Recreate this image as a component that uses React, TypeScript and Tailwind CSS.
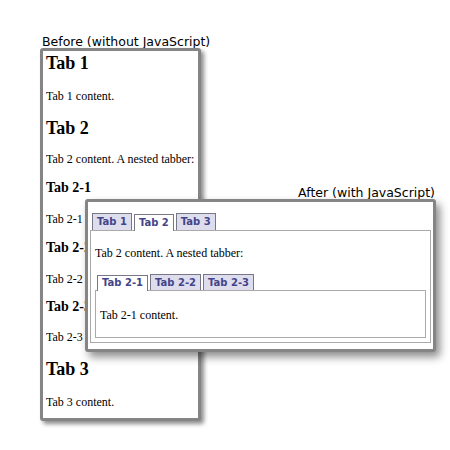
import React from 'react';

const serif = 'font-["Liberation_Serif","Times_New_Roman",serif] text-black';
const label = 'font-["DejaVu_Sans",Verdana,sans-serif] text-[12.5px] leading-[13px] text-black whitespace-nowrap';

function Tab({ title, active, h }: { title: string; active?: boolean; h: string }) {
  return (
    <div
      className={`${h} flex items-center px-[4px] border border-b-0 border-[#778] font-["DejaVu_Sans",Verdana,sans-serif] text-[10px] font-bold text-[#448] leading-none ${
        active ? 'bg-white mb-[-1px] pb-px' : 'bg-[#dde]'
      }`}
    >
      {title}
    </div>
  );
}

function BeforeWindow() {
  const rows: { kind: 'h2' | 'h3' | 'p'; text: string; mt: string }[] = [
    { kind: 'h2', text: 'Tab 1', mt: 'mt-[2px]' },
    { kind: 'p', text: 'Tab 1 content.', mt: 'mt-[16px]' },
    { kind: 'h2', text: 'Tab 2', mt: 'mt-[15px]' },
    { kind: 'p', text: 'Tab 2 content. A nested tabber:', mt: 'mt-[14px]' },
    { kind: 'h3', text: 'Tab 2-1', mt: 'mt-[14px]' },
    { kind: 'p', text: 'Tab 2-1 content.', mt: 'mt-[16px]' },
    { kind: 'h3', text: 'Tab 2-2', mt: 'mt-[14px]' },
    { kind: 'p', text: 'Tab 2-2 content.', mt: 'mt-[16px]' },
    { kind: 'h3', text: 'Tab 2-3', mt: 'mt-[13px]' },
    { kind: 'p', text: 'Tab 2-3 content.', mt: 'mt-[15px]' },
    { kind: 'h2', text: 'Tab 3', mt: 'mt-[15px]' },
    { kind: 'p', text: 'Tab 3 content.', mt: 'mt-[16px]' },
  ];

  return (
    <div className="absolute left-[40px] top-[35px] flex flex-col">
      <div className={`${label} pl-[2px]`}>Before (without JavaScript)</div>
      <div className={`w-[161px] h-[373px] bg-white border-[3px] border-[#858585] rounded-[3px] shadow-[3px_3px_4px_rgba(0,0,0,0.45)] pl-[3px] overflow-hidden ${serif}`}>
        {rows.map((r, i) => {
          if (r.kind === 'h2') return <div key={i} className={`${r.mt} text-[18px] leading-[20px] font-bold whitespace-nowrap`}>{r.text}</div>;
          if (r.kind === 'h3') return <div key={i} className={`${r.mt} text-[14px] leading-[16px] font-bold whitespace-nowrap`}>{r.text}</div>;
          return <div key={i} className={`${r.mt} text-[12px] leading-[14px] whitespace-nowrap`}>{r.text}</div>;
        })}
      </div>
    </div>
  );
}

function AfterWindow() {
  return (
    <div className="absolute left-[85px] top-[186px] flex flex-col items-end">
      <div className={`${label} pr-px`}>After (with JavaScript)</div>
      <div className="w-[351px] h-[153px] bg-white border-[3px] border-[#858585] rounded-[3px] shadow-[4px_5px_8px_rgba(0,0,0,0.45)] px-[2px] pt-[11px]">
        {/* outer tabber */}
        <div className="flex items-end gap-[2px] pl-[2px] border-b border-[#aaa]">
          <Tab title="Tab 1" h="h-[17px]" />
          <Tab title="Tab 2" h="h-[17px]" active />
          <Tab title="Tab 3" h="h-[17px]" />
        </div>
        <div className={`border border-t-0 border-[#aaa] pl-[4px] pr-[4px] pt-[15px] pb-[4px] ${serif}`}>
          <div className="text-[12px] leading-[14px]">Tab 2 content. A nested tabber:</div>
          {/* nested tabber */}
          <div className="mt-[14px] flex items-end gap-[2px] pl-[2px] border-b border-[#aaa]">
            <Tab title="Tab 2-1" h="h-[16px]" active />
            <Tab title="Tab 2-2" h="h-[16px]" />
            <Tab title="Tab 2-3" h="h-[16px]" />
          </div>
          <div className="border border-t-0 border-[#aaa] pl-[4px] pt-[17px] pb-[15px]">
            <div className="text-[12px] leading-[14px]">Tab 2-1 content.</div>
          </div>
        </div>
      </div>
    </div>
  );
}

export default function App() {
  return (
    <div className="relative w-[450px] h-[450px] bg-white overflow-hidden">
      <BeforeWindow />
      <AfterWindow />
    </div>
  );
}
